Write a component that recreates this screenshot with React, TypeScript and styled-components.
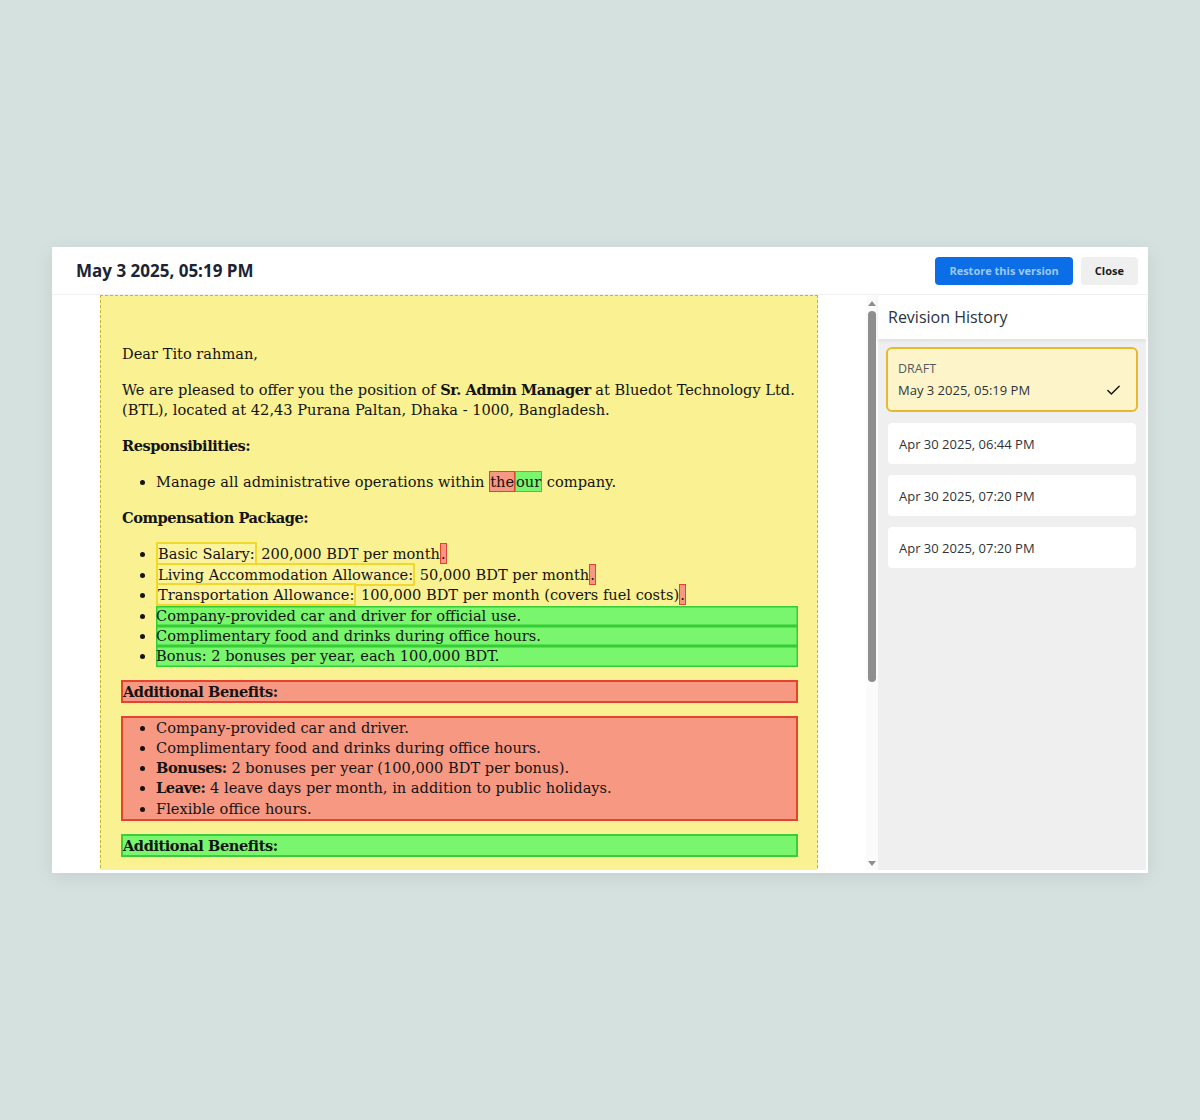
import styled, { createGlobalStyle } from 'styled-components';
import { Check } from 'lucide-react';

const GlobalStyle = createGlobalStyle`
  * {
    box-sizing: border-box;
  }

  body {
    margin: 0;
    background: #d5e1df;
    font-family: 'Open Sans', 'Noto Sans', sans-serif;
  }
`;

const Backdrop = styled.div`
  min-height: 100vh;
  display: flex;
  align-items: center;
  justify-content: center;
`;

const Modal = styled.div`
  width: 1096px;
  height: 626px;
  background: #ffffff;
  display: flex;
  flex-direction: column;
  box-shadow: 0 4px 18px rgba(0, 0, 0, 0.08);
`;

const Header = styled.header`
  height: 48px;
  flex-shrink: 0;
  display: flex;
  align-items: center;
  justify-content: space-between;
  padding: 0 10px 0 24px;
  border-bottom: 1px solid #f0f0f0;
`;

const Title = styled.h2`
  margin: 0;
  font-size: 17px;
  font-weight: 700;
  color: #1c2434;
`;

const Actions = styled.div`
  display: flex;
  gap: 8px;
`;

const Button = styled.button<{ $primary?: boolean }>`
  height: 28px;
  padding: 0 14px;
  border: none;
  border-radius: 4px;
  font-family: 'Open Sans', sans-serif;
  font-size: 11px;
  font-weight: 700;
  cursor: pointer;
  background: ${(p) => (p.$primary ? '#0b6ee6' : '#efefef')};
  color: ${(p) => (p.$primary ? '#9cc8f6' : '#1a1a1a')};
`;

const Body = styled.div`
  flex: 1;
  min-height: 0;
  display: flex;
  padding: 0 2px 3px 0;
`;

const DocPane = styled.div`
  flex: 1;
  min-width: 0;
  display: flex;
`;

const DocScroll = styled.div`
  flex: 1;
  overflow-y: auto;
  scrollbar-width: none;
`;

/* drawn scrollbar, the screenshot browser hides native ones */
const ScrollRail = styled.div`
  width: 12px;
  flex-shrink: 0;
  display: flex;
  flex-direction: column;
  align-items: center;
  padding: 6px 0 4px;
  gap: 5px;
  background: #fbfbfb;
`;

const Arrow = styled.span<{ $down?: boolean }>`
  width: 0;
  height: 0;
  flex-shrink: 0;
  border-left: 4px solid transparent;
  border-right: 4px solid transparent;
  ${(p) => (p.$down ? 'border-top: 5px solid #8e8e8e;' : 'border-bottom: 5px solid #8e8e8e;')}
`;

const Track = styled.div`
  flex: 1;
  width: 100%;
  display: flex;
  justify-content: center;
`;

const Thumb = styled.div`
  width: 8px;
  border-radius: 4px;
  background: #8e8e8e;
`;

const Page = styled.article`
  width: 718px;
  margin: 0 auto;
  background: #f9f192;
  border: 1px dashed #c8b52a;
  padding: 32px 19px 40px 21px;
  font-family: 'DejaVu Serif', 'Liberation Serif', serif;
  font-size: 14.6px;
  line-height: 20px;
  color: #141414;

  b {
    letter-spacing: -0.45px;
  }
`;

const Para = styled.p<{ $mb?: number }>`
  margin: 16px 0 ${(p) => (p.$mb ?? 16)}px;
`;

const Heading = styled.p`
  margin: 16px 0;
  font-weight: 700;
  letter-spacing: -0.45px;
`;

const List = styled.ul<{ $mb?: number }>`
  margin: 16px 0 ${(p) => (p.$mb ?? 16)}px;
  padding-left: 34px;
  line-height: 20.4px;
`;

const Item = styled.li<{ $kind?: 'ins' | 'del' }>`
  background: ${(p) => (p.$kind === 'ins' ? '#7af56e' : p.$kind === 'del' ? '#f79882' : 'transparent')};
  box-shadow: ${(p) =>
    p.$kind === 'ins' ? 'inset 0 0 0 1.5px #35cc35' : p.$kind === 'del' ? 'inset 0 0 0 1.5px #e5432f' : 'none'};
`;

const DiffBlock = styled.div<{ $kind: 'ins' | 'del' }>`
  margin: 13px 0 13px -1px;
  background: ${(p) => (p.$kind === 'ins' ? '#7af56e' : '#f79882')};
  border: 2px solid ${(p) => (p.$kind === 'ins' ? '#3ccc3c' : '#e5432f')};

  & > p,
  & > ul {
    margin: 0;
  }

  & > ul {
    padding-left: 33px;
    line-height: 20.2px;
  }
`;

const BlockHeading = styled.p`
  font-weight: 700;
  line-height: 19px;
  letter-spacing: -0.45px;
`;

const Mark = styled.span<{ $kind: 'ins' | 'del' | 'mod' }>`
  padding: 1px 0;
  border: ${(p) => (p.$kind === 'mod' ? '2px' : '1.5px')} solid
    ${(p) => (p.$kind === 'ins' ? '#3ccc3c' : p.$kind === 'del' ? '#e5432f' : '#f2d82a')};
  background: ${(p) => (p.$kind === 'ins' ? '#7af56e' : p.$kind === 'del' ? '#f79882' : '#fbf39e')};
`;

const Sidebar = styled.aside`
  width: 268px;
  flex-shrink: 0;
  background: #efefef;
  display: flex;
  flex-direction: column;
`;

const SidebarHeader = styled.div`
  height: 44px;
  display: flex;
  align-items: center;
  padding-left: 10px;
  background: #ffffff;
  font-size: 16px;
  color: #2a3340;
  box-shadow: 0 2px 4px rgba(0, 0, 0, 0.07);
`;

const RevisionList = styled.div`
  display: flex;
  flex-direction: column;
  gap: 11px;
  padding: 8px 10px;
`;

const RevisionCard = styled.div<{ $active?: boolean }>`
  display: flex;
  align-items: flex-end;
  justify-content: space-between;
  padding: ${(p) => (p.$active ? '11px 14px 11px 10px' : '11.5px 11px')};
  border-radius: ${(p) => (p.$active ? '6px' : '4px')};
  background: ${(p) => (p.$active ? '#fdf5c9' : '#ffffff')};
  border: ${(p) => (p.$active ? '2px solid #e6b930' : 'none')};
  margin: ${(p) => (p.$active ? '0 -2px' : '0')};
  font-size: 13px;
  line-height: 18px;
  color: #2f3338;
  cursor: pointer;
`;

const RevisionMeta = styled.div`
  display: flex;
  flex-direction: column;
  gap: 3px;
`;

const Status = styled.span`
  font-size: 12.5px;
  color: #555a60;
  text-transform: uppercase;
`;

const revisions = ['Apr 30 2025, 06:44 PM', 'Apr 30 2025, 07:20 PM', 'Apr 30 2025, 07:20 PM'];

// visible share of the document, sizes the drawn scroll thumb
const thumbShare = 0.68;

const App = () => {
  return (
    <>
      <GlobalStyle />
      <Backdrop>
        <Modal>
          <Header>
            <Title>May 3 2025, 05:19 PM</Title>
            <Actions>
              <Button $primary>Restore this version</Button>
              <Button>Close</Button>
            </Actions>
          </Header>

          <Body>
            <DocPane>
              <DocScroll>
                <Page>
                  <Para>Dear Tito rahman,</Para>
                  <Para>
                    We are pleased to offer you the position of <b>Sr. Admin Manager</b> at Bluedot Technology
                    Ltd. (BTL), located at 42,43 Purana Paltan, Dhaka - 1000, Bangladesh.
                  </Para>

                  <Heading>Responsibilities:</Heading>
                  <List>
                    <li>
                      Manage all administrative operations within <Mark $kind="del">the</Mark>
                      <Mark $kind="ins">our</Mark> company.
                    </li>
                  </List>

                  <Heading>Compensation Package:</Heading>
                  <List $mb={13}>
                    <li>
                      <Mark $kind="mod">Basic Salary:</Mark> 200,000 BDT per month<Mark $kind="del">.</Mark>
                    </li>
                    <li>
                      <Mark $kind="mod">Living Accommodation Allowance:</Mark> 50,000 BDT per month
                      <Mark $kind="del">.</Mark>
                    </li>
                    <li>
                      <Mark $kind="mod">Transportation Allowance:</Mark> 100,000 BDT per month (covers fuel costs)
                      <Mark $kind="del">.</Mark>
                    </li>
                    <Item $kind="ins">Company-provided car and driver for official use.</Item>
                    <Item $kind="ins">Complimentary food and drinks during office hours.</Item>
                    <Item $kind="ins">Bonus: 2 bonuses per year, each 100,000 BDT.</Item>
                  </List>

                  <DiffBlock $kind="del">
                    <BlockHeading>Additional Benefits:</BlockHeading>
                  </DiffBlock>
                  <DiffBlock $kind="del">
                    <ul>
                      <li>Company-provided car and driver.</li>
                      <li>Complimentary food and drinks during office hours.</li>
                      <li>
                        <b>Bonuses:</b> 2 bonuses per year (100,000 BDT per bonus).
                      </li>
                      <li>
                        <b>Leave:</b> 4 leave days per month, in addition to public holidays.
                      </li>
                      <li>Flexible office hours.</li>
                    </ul>
                  </DiffBlock>
                  <DiffBlock $kind="ins">
                    <BlockHeading>Additional Benefits:</BlockHeading>
                  </DiffBlock>
                  <DiffBlock $kind="ins">
                    <ul>
                      <li>
                        <b>Leave:</b> 4 leave days per month, in addition to public holidays.
                      </li>
                      <li>Flexible office hours.</li>
                    </ul>
                  </DiffBlock>

                  <Para>
                    Please confirm your acceptance of this offer by signing and returning a copy of this letter.
                  </Para>
                  <Para>We look forward to welcoming you to the team.</Para>
                  <Para $mb={0}>
                    Sincerely,
                    <br />
                    HR Department
                    <br />
                    Bluedot Technology Ltd.
                  </Para>
                </Page>
              </DocScroll>

              <ScrollRail>
                <Arrow />
                <Track>
                  <Thumb style={{ height: `${thumbShare * 100}%` }} />
                </Track>
                <Arrow $down />
              </ScrollRail>
            </DocPane>

            <Sidebar>
              <SidebarHeader>Revision History</SidebarHeader>
              <RevisionList>
                <RevisionCard $active>
                  <RevisionMeta>
                    <Status>Draft</Status>
                    <span>May 3 2025, 05:19 PM</span>
                  </RevisionMeta>
                  <Check size={17} strokeWidth={2} color="#111" />
                </RevisionCard>
                {revisions.map((date, i) => (
                  <RevisionCard key={i}>{date}</RevisionCard>
                ))}
              </RevisionList>
            </Sidebar>
          </Body>
        </Modal>
      </Backdrop>
    </>
  );
};

export default App;
